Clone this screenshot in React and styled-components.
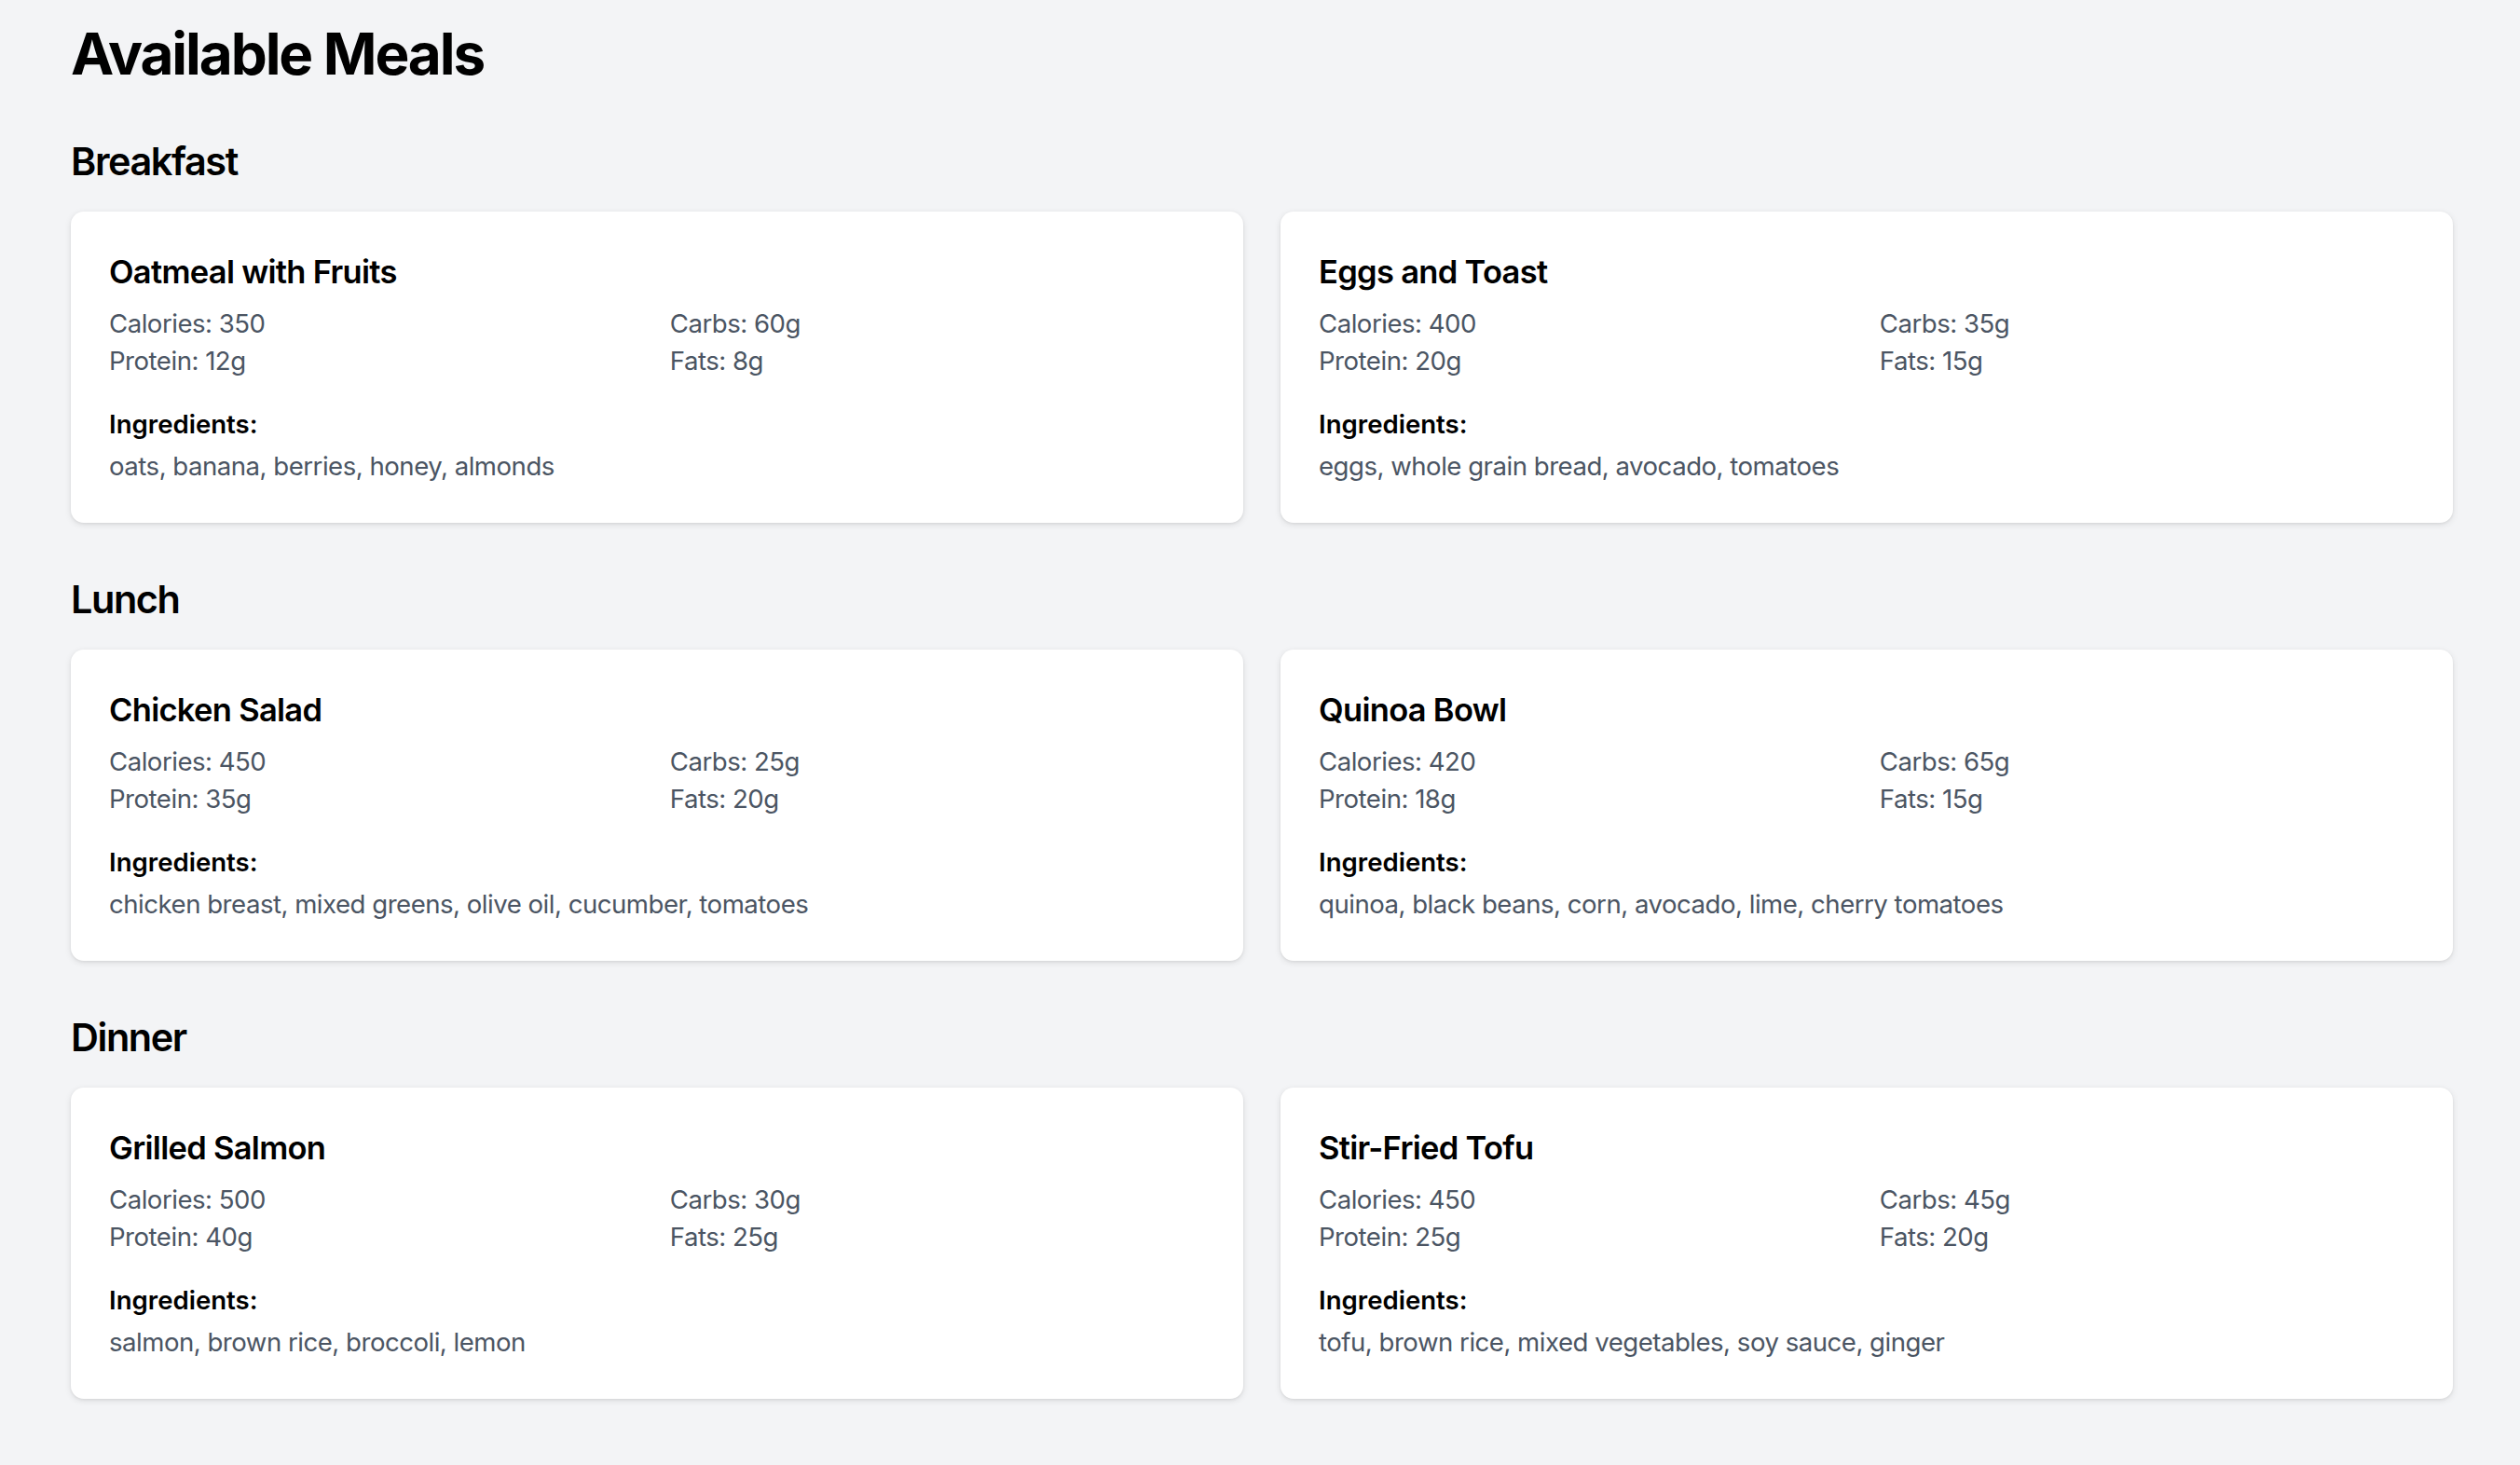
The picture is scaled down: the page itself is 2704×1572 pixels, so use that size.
import React from "react";
import styled, { createGlobalStyle } from "styled-components";

const meals = [
  {
    category: "Breakfast",
    items: [
      {
        name: "Oatmeal with Fruits",
        calories: 350,
        protein: 12,
        carbs: 60,
        fats: 8,
        ingredients: ["oats", "banana", "berries", "honey", "almonds"],
      },
      {
        name: "Eggs and Toast",
        calories: 400,
        protein: 20,
        carbs: 35,
        fats: 15,
        ingredients: ["eggs", "whole grain bread", "avocado", "tomatoes"],
      },
    ],
  },
  {
    category: "Lunch",
    items: [
      {
        name: "Chicken Salad",
        calories: 450,
        protein: 35,
        carbs: 25,
        fats: 20,
        ingredients: ["chicken breast", "mixed greens", "olive oil", "cucumber", "tomatoes"],
      },
      {
        name: "Quinoa Bowl",
        calories: 420,
        protein: 18,
        carbs: 65,
        fats: 15,
        ingredients: ["quinoa", "black beans", "corn", "avocado", "lime", "cherry tomatoes"],
      },
    ],
  },
  {
    category: "Dinner",
    items: [
      {
        name: "Grilled Salmon",
        calories: 500,
        protein: 40,
        carbs: 30,
        fats: 25,
        ingredients: ["salmon", "brown rice", "broccoli", "lemon"],
      },
      {
        name: "Stir-Fried Tofu",
        calories: 450,
        protein: 25,
        carbs: 45,
        fats: 20,
        ingredients: ["tofu", "brown rice", "mixed vegetables", "soy sauce", "ginger"],
      },
    ],
  },
];

const GlobalStyle = createGlobalStyle`
  * {
    box-sizing: border-box;
  }
  body {
    margin: 0;
    background: #f3f4f6;
    font-family: Inter, "Noto Sans", "Liberation Sans", sans-serif;
    color: #000;
    -webkit-font-smoothing: antialiased;
  }
`;

const App = () => {
  return (
    <>
      <GlobalStyle />
      <StyledPage>
        <StyledTitle>Available Meals</StyledTitle>
        {meals.map(section => (
          <StyledSection key={section.category}>
            <StyledHeading>{section.category}</StyledHeading>
            <StyledGrid>
              {section.items.map(meal => (
                <StyledCard key={meal.name}>
                  <StyledMealName>{meal.name}</StyledMealName>
                  <StyledStats>
                    <span>Calories: {meal.calories}</span>
                    <span>Carbs: {meal.carbs}g</span>
                    <span>Protein: {meal.protein}g</span>
                    <span>Fats: {meal.fats}g</span>
                  </StyledStats>
                  <StyledLabel>Ingredients:</StyledLabel>
                  <StyledIngredients>{meal.ingredients.join(", ")}</StyledIngredients>
                </StyledCard>
              ))}
            </StyledGrid>
          </StyledSection>
        ))}
      </StyledPage>
    </>
  );
};

const StyledPage = styled.main`
  padding: 23px 72px 56px 76px;
`;

const StyledTitle = styled.h1`
  margin: 0 0 54px;
  font-size: 62px;
  line-height: 69px;
  font-weight: 700;
  letter-spacing: -2.1px;
`;

const StyledSection = styled.section`
  margin-bottom: 55px;
  &:last-child {
    margin-bottom: 0;
  }
`;

const StyledHeading = styled.h2`
  margin: 0 0 26px;
  font-size: 41.4px;
  line-height: 55px;
  font-weight: 600;
  letter-spacing: -1.4px;
`;

const StyledGrid = styled.div`
  display: grid;
  grid-template-columns: 1fr 1fr;
  gap: 40px;
`;

const StyledCard = styled.div`
  background: #fff;
  border-radius: 14px;
  padding: 41px;
  box-shadow: 0 2px 7px rgba(0, 0, 0, 0.1), 0 1px 3px rgba(0, 0, 0, 0.06);
`;

const StyledMealName = styled.h3`
  margin: 0 0 12px;
  font-size: 34.5px;
  line-height: 48px;
  font-weight: 600;
  letter-spacing: -0.7px;
`;

const StyledStats = styled.div`
  display: grid;
  grid-template-columns: 1fr 1fr;
  column-gap: 27.6px;
  font-size: 27.6px;
  line-height: 39.5px;
  letter-spacing: -0.5px;
  color: #4b5563;
`;

const StyledLabel = styled.h4`
  margin: 29px 0 0;
  font-size: 27.6px;
  line-height: 39.5px;
  font-weight: 600;
  color: #000;
`;

const StyledIngredients = styled.p`
  margin: 5px 0 0;
  font-size: 27.6px;
  line-height: 39.5px;
  letter-spacing: -0.5px;
  color: #4b5563;
`;

export default App;
